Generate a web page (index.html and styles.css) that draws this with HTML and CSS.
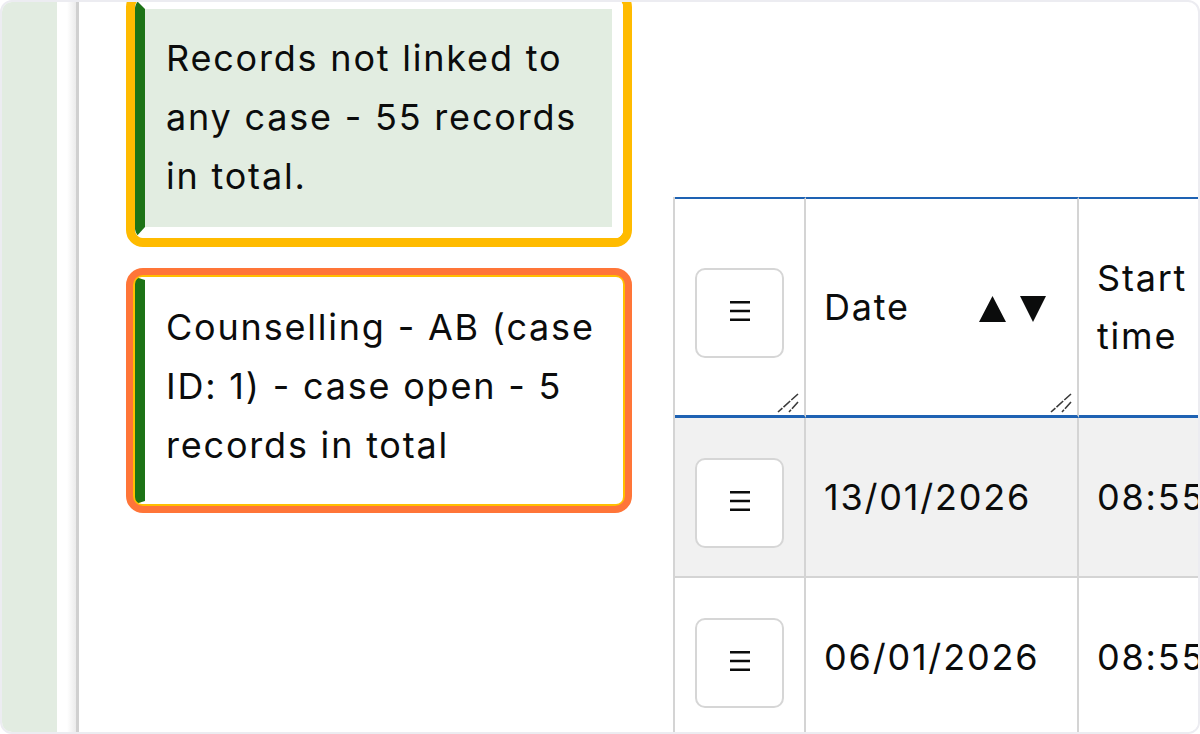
FILE: index.html
```html
<!DOCTYPE html>
<html lang="en">
<head>
<meta charset="utf-8">
<title>Records</title>
<link rel="stylesheet" href="styles.css">
</head>
<body>
<div class="frame">
  <aside class="sidebar"></aside>
  <div class="gutter"></div>
  <main class="main">
    <section class="cards">
      <div class="card card-selected">
        <div class="card-body card-body-tinted">
          <p class="card-text">Records not linked to any case - 55 records in total.</p>
        </div>
      </div>
      <div class="card card-focus">
        <div class="card-body card-body-plain">
          <p class="card-text">Counselling - AB (case ID: 1) - case open - 5 records in total</p>
        </div>
      </div>
    </section>
    <section class="table-wrap">
      <div class="grid" role="table">
        <div class="cell head cell-btn" role="columnheader">
          <button class="menu-btn" type="button" aria-label="Column menu">
            <svg width="20" height="20" viewBox="0 0 20 20"><path d="M0 1.3h20M0 10h20M0 18.7h20" stroke="#0b0c0c" stroke-width="2.6" fill="none"/></svg>
          </button>
          <svg class="grip" width="22" height="20" viewBox="0 0 22 20"><path d="M21 1L1 19M21 9L12 19" stroke="#3a3a3a" stroke-width="1.6" stroke-dasharray="9 1.5" fill="none"/></svg>
        </div>
        <div class="cell head cell-date" role="columnheader">
          <span class="head-label">Date</span>
          <svg class="sort" width="68" height="27" viewBox="0 0 68 27"><path d="M0 26L13.5 0L27 26Z M41 0H67L54 26Z" fill="#0b0c0c"/></svg>
          <svg class="grip" width="22" height="20" viewBox="0 0 22 20"><path d="M21 1L1 19M21 9L12 19" stroke="#3a3a3a" stroke-width="1.6" stroke-dasharray="9 1.5" fill="none"/></svg>
        </div>
        <div class="cell head cell-text" role="columnheader">
          <span class="head-label">Start time</span>
        </div>

        <div class="cell alt cell-btn" role="cell">
          <button class="menu-btn" type="button" aria-label="Row menu">
            <svg width="20" height="20" viewBox="0 0 20 20"><path d="M0 1.3h20M0 10h20M0 18.7h20" stroke="#0b0c0c" stroke-width="2.6" fill="none"/></svg>
          </button>
        </div>
        <div class="cell alt cell-text" role="cell">13/01/2026</div>
        <div class="cell alt cell-text" role="cell">08:55</div>

        <div class="cell cell-btn" role="cell">
          <button class="menu-btn" type="button" aria-label="Row menu">
            <svg width="20" height="20" viewBox="0 0 20 20"><path d="M0 1.3h20M0 10h20M0 18.7h20" stroke="#0b0c0c" stroke-width="2.6" fill="none"/></svg>
          </button>
        </div>
        <div class="cell cell-text" role="cell">06/01/2026</div>
        <div class="cell cell-text" role="cell">08:55</div>
      </div>
    </section>
  </main>
</div>
</body>
</html>
```
FILE: styles.css
```css
html, body {
  margin: 0;
  padding: 0;
  background: #ffffff;
}

body {
  font-family: "Inter", "DejaVu Sans", sans-serif;
  color: #0b0c0c;
}

.frame {
  width: 1200px;
  height: 734px;
  box-sizing: border-box;
  border: 2px solid #ececf1;
  border-radius: 12px;
  overflow: hidden;
  display: flex;
  background: #ffffff;
}

.sidebar {
  flex: none;
  width: 55px;
  background: #e2ece1;
}

.gutter {
  flex: none;
  width: 19px;
  background: linear-gradient(to right, #ffffff 0, #ffffff 10px, #ebebeb 19px);
  border-right: 3px solid #d0d0d0;
}

.main {
  flex: 1;
  display: flex;
  align-items: flex-start;
  min-width: 0;
}

.cards {
  flex: none;
  width: 506px;
  margin-left: 47px;
  margin-top: -12px;
  display: flex;
  flex-direction: column;
  gap: 21px;
}

.card {
  border-radius: 17px;
  overflow: hidden;
  background: #ffffff;
}

.card-selected {
  border: 9px solid #ffbb00;
}

.card-focus {
  border: 7px solid #ff7538;
  padding: 2px;
  background: #ffbf00;
}

.card-body {
  border-left: 10px solid #1d7316;
  border-radius: 9px 0 0 9px;
}

.card-body-tinted {
  border-top: 10px solid #ffffff;
  border-bottom: 11px solid #ffffff;
  border-right: 11px solid #ffffff;
  background: #e2ede1;
  padding: 20px 12px 21px 21px;
}

.card-body-plain {
  border-top: 3px solid #ffffff;
  border-bottom: 3px solid #ffffff;
  border-right: 3px solid #ffffff;
  background: #ffffff;
  border-radius: 7px;
  padding: 18px 12px 26px 21px;
}

.card-text {
  margin: 0;
  font-size: 36px;
  line-height: 59px;
  letter-spacing: 1.8px;
}

.table-wrap {
  flex: none;
  margin-left: 41px;
  margin-top: 195px;
}

.grid {
  display: grid;
  grid-template-columns: 131px 273px 150px;
  border-left: 2px solid #d4d4d4;
  font-size: 36px;
  line-height: 58px;
  letter-spacing: 1.8px;
}

.cell {
  box-sizing: border-box;
  height: 160px;
  border-right: 2px solid #d4d4d4;
  border-bottom: 2px solid #d4d4d4;
  display: flex;
  align-items: center;
  padding: 0 20px 0 18px;
  background: #ffffff;
  white-space: nowrap;
}

.cell.head {
  position: relative;
  height: 221px;
  border-top: 2px solid #1e62b3;
  border-bottom: 3px solid #1e62b3;
}

.cell.alt {
  background: #f1f1f1;
}

.cell-btn {
  padding: 0 20px;
}

.head .head-label {
  white-space: normal;
}

.cell-date {
  justify-content: space-between;
  padding-right: 30px;
}

.sort {
  display: block;
  margin-top: 4px;
}

.menu-btn {
  width: 89px;
  height: 90px;
  box-sizing: border-box;
  border: 2px solid #d6d6d6;
  border-radius: 10px;
  background: #ffffff;
  display: flex;
  align-items: center;
  justify-content: center;
  margin-top: 11px;
  padding: 0 0 4px 0;
}

.grip {
  position: absolute;
  right: 5px;
  bottom: 2px;
}
```
